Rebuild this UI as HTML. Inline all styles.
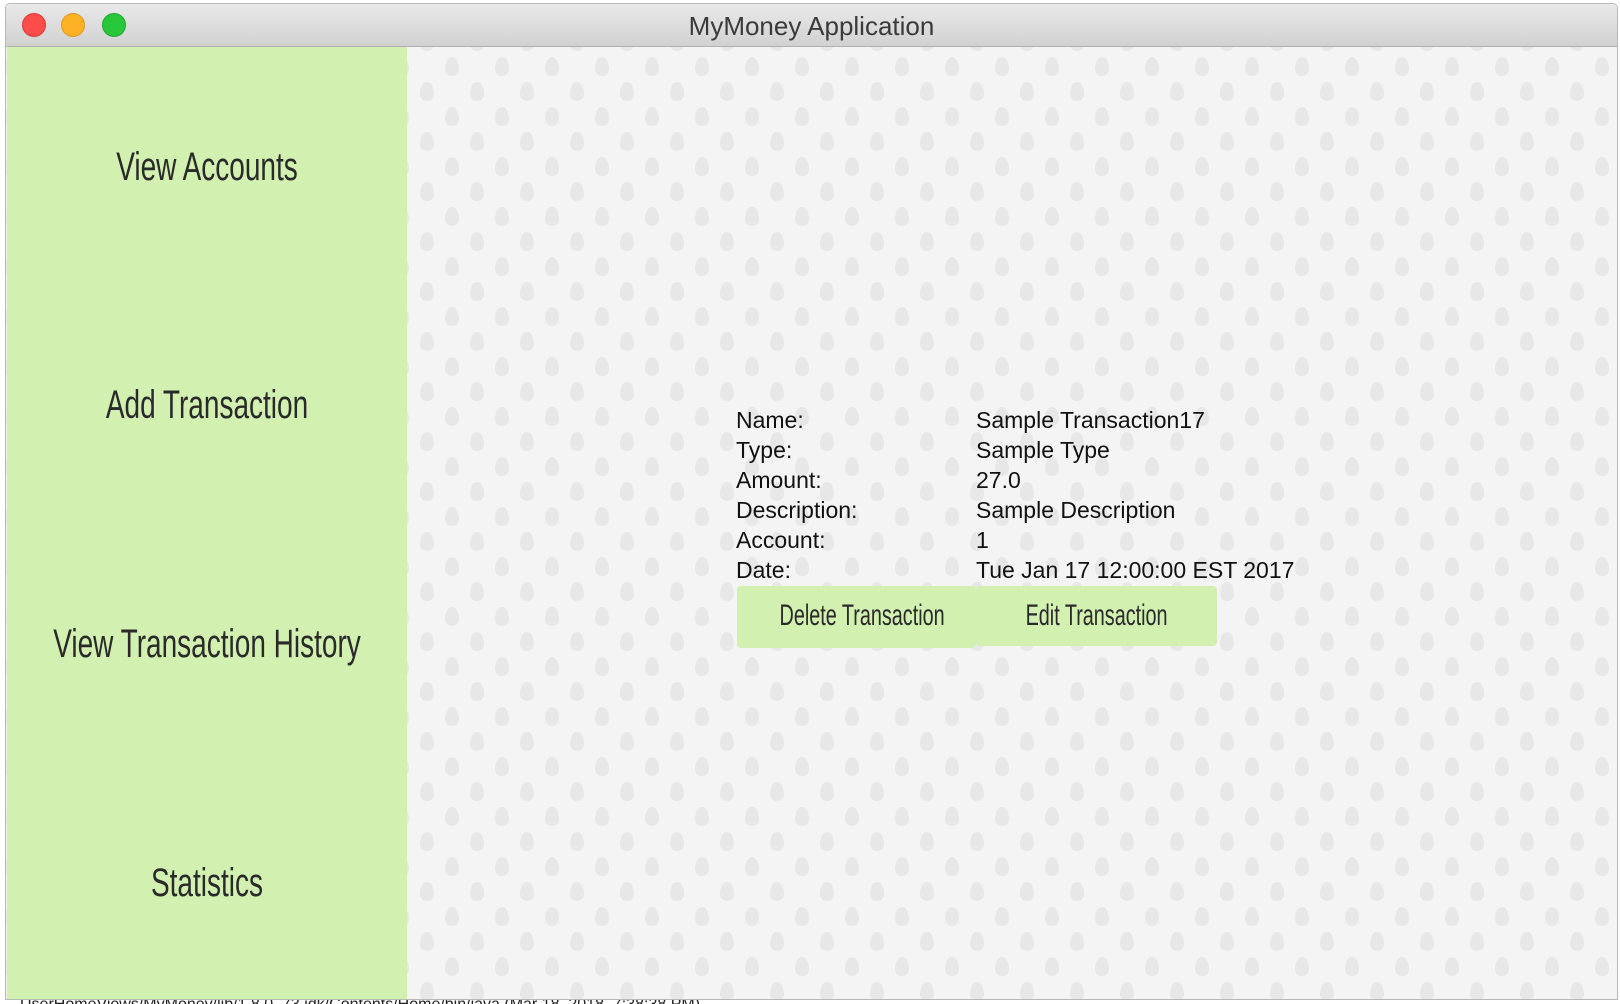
<!DOCTYPE html>
<html><head><meta charset="utf-8"><style>
html,body{margin:0;padding:0;width:1620px;height:1004px;overflow:hidden;background:#fff;position:relative;font-family:"Liberation Sans",sans-serif}
.win{position:absolute;left:5px;top:3px;width:1613px;height:997px;background:#f4f4f4;border:1px solid #b8b8b8;box-sizing:border-box;overflow:hidden;border-radius:5px 5px 0 0}
.bar{position:absolute;left:0;top:0;right:0;height:42px;background:linear-gradient(#e9e9e9,#d1d1d1);border-bottom:1px solid #b0b0b0}
.dot{position:absolute;top:9px;width:24px;height:24px;border-radius:50%;box-sizing:border-box}
.title{position:absolute;left:0;right:0;top:7px;text-align:center;font-size:26px;color:#3a3a3a}
.pat{position:absolute;left:0;top:43px;width:1613px;height:960px}
.side{position:absolute;left:1px;top:43px;width:400px;height:960px;background:#d2f0b0}
.nav{position:absolute;left:-100px;width:600px;text-align:center;font-size:40px;color:#2a2a2a;transform:scaleX(0.7);line-height:40px;white-space:nowrap}
.t{position:absolute;font-size:23px;color:#111;line-height:30px}
.btn{position:absolute;background:#d2f0b0;border-radius:4px;text-align:center}
.btn span{display:inline-block;font-size:30px;color:#2a2a2a;transform:scaleX(0.66);white-space:nowrap}
.bot{position:absolute;left:20px;top:996px;font-size:16px;color:#222}
</style></head><body>
<div class="bot">UserHomeViews/MyMoney/lib/1.8.0_73.jdk/Contents/Home/bin/java (Mar 18, 2018, 7:38:38 PM)</div>
<div class="win">
<svg class="pat" xmlns="http://www.w3.org/2000/svg" width="1613" height="960">
<defs>
<path id="e" d="M0 -10 C5 -10 7 -3 7 2 C7 6 4 9 0 9 C-4 9 -7 6 -7 2 C-7 -3 -5 -10 0 -10Z" fill="#e7e7e7"/>
<pattern id="p" patternUnits="userSpaceOnUse" width="50" height="50" x="-4" y="-25">
<use href="#e" x="25" y="20"/>
<use href="#e" x="0" y="45"/><use href="#e" x="50" y="45"/>
<use href="#e" x="0" y="-5"/><use href="#e" x="50" y="-5"/>
</pattern></defs>
<rect width="1613" height="960" fill="#f4f4f4"/><rect width="1613" height="960" fill="url(#p)"/>
</svg>
<div class="bar">
<div class="dot" style="left:16px;background:#fc4d4a;border:1px solid #de3b37"></div>
<div class="dot" style="left:55px;background:#fdb124;border:1px solid #dd9a1c"></div>
<div class="dot" style="left:96px;background:#28c73a;border:1px solid #1ea82b"></div>
<div class="title">MyMoney Application</div>
</div>
<div class="side">
<div class="nav" style="top:100px">View Accounts</div>
<div class="nav" style="top:338px">Add Transaction</div>
<div class="nav" style="top:577px">View Transaction History</div>
<div class="nav" style="top:816px">Statistics</div>
</div>
<div class="t" style="left:730px;top:401px">Name:<br>Type:<br>Amount:<br>Description:<br>Account:<br>Date:</div>
<div class="t" style="left:970px;top:401px">Sample Transaction17<br>Sample Type<br>27.0<br>Sample Description<br>1<br>Tue Jan 17 12:00:00 EST 2017</div>
<div class="btn" style="left:731px;top:582px;width:239px;height:62px;line-height:60px"><span>Delete Transaction</span></div>
<div class="btn" style="left:970px;top:582px;width:241px;height:60px;line-height:60px"><span>Edit Transaction</span></div>
</div>
</body></html>
